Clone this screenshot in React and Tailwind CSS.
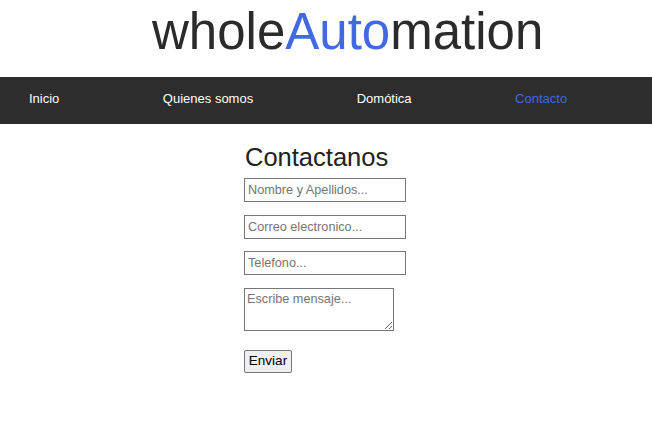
export default function App() {
  const font = { fontFamily: '"Liberation Sans", Arial, sans-serif' };
  return (
    <div className="w-[652px] h-[442px] bg-white" style={font}>
      <header className="h-[77px] pl-[152px] pt-[3px]">
        <h1 className="text-[51px] leading-[58px] text-[#2b2b2b] font-normal">
          whole<span className="text-[#4169e1]">Auto</span>mation
        </h1>
      </header>
      <nav className="h-[47px] bg-[#2d2d2d] flex items-center pl-[29px] pb-[4px] gap-[103.5px] text-[13px] text-white">
        <a>Inicio</a>
        <a>Quienes somos</a>
        <a>Domótica</a>
        <a className="text-[#4169e1]">Contacto</a>
      </nav>
      <main className="pl-[244px] pt-[18px] flex flex-col items-start">
        <h2 className="text-[25.5px] leading-[30px] text-[#222] pl-[1px]">Contactanos</h2>
        <input
          className="mt-[6px] w-[162px] h-[24px] border border-[#767676] px-[3px] text-[12.7px] placeholder:text-[#757575] outline-none"
          placeholder="Nombre y Apellidos..."
        />
        <input
          className="mt-[13px] w-[162px] h-[24px] border border-[#767676] px-[3px] text-[12.7px] placeholder:text-[#757575] outline-none"
          placeholder="Correo electronico..."
        />
        <input
          className="mt-[12px] w-[162px] h-[24px] border border-[#767676] px-[3px] text-[12.7px] placeholder:text-[#757575] outline-none"
          placeholder="Telefono..."
        />
        <textarea
          className="mt-[13px] w-[150px] h-[43px] border border-[#767676] px-[2px] py-[2px] text-[12.7px] leading-[16px] placeholder:text-[#757575] outline-none"
          placeholder="Escribe mensaje..."
        />
        <button className="mt-[19px] w-[48px] h-[23px] bg-[#efefef] border border-[#767676] rounded-[2px] text-[13.5px] text-black">
          Enviar
        </button>
      </main>
    </div>
  );
}
